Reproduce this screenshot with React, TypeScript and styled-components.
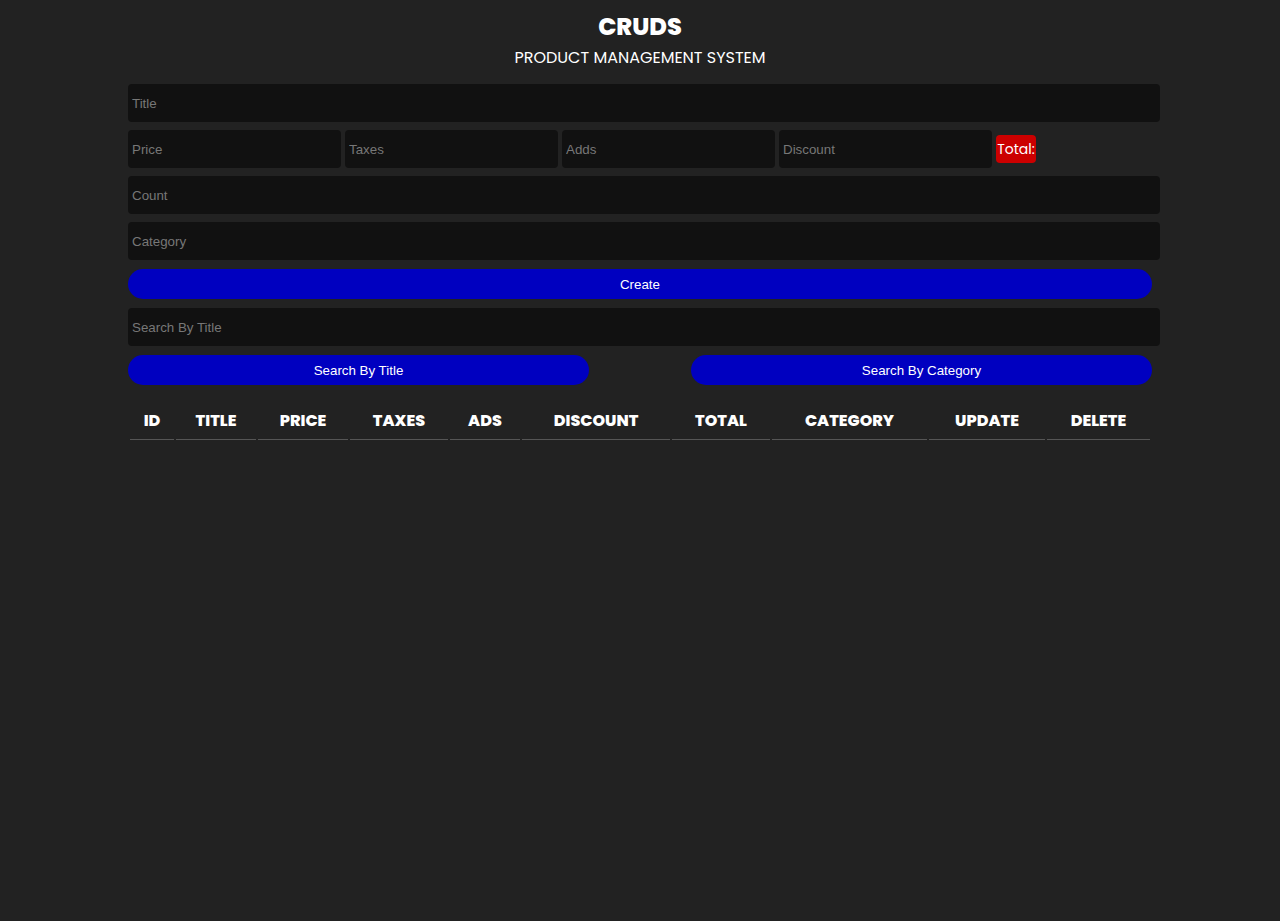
import React from "react";
import styled, { createGlobalStyle } from "styled-components";

const Global = createGlobalStyle`
  html, body { margin: 0; padding: 0; background: #222222; }
  body { font-family: "Liberation Sans", Arial, sans-serif; color: #fff; }
`;

const Page = styled.div`
  min-height: 921px;
  background: #222222;
  display: flex;
  justify-content: center;
`;

const Crud = styled.div`
  width: 1024px;
  display: flex;
  flex-direction: column;
`;

const Head = styled.header`
  display: flex;
  flex-direction: column;
  align-items: center;
  padding-top: 12px;
  font-family: "Poppins", "Lato", "Noto Sans", sans-serif;
`;

const Title = styled.h2`
  margin: 0;
  font-size: 24px;
  font-weight: 800;
  line-height: 30px;
`;

const Sub = styled.p`
  margin: 4px 0 0;
  font-size: 16px;
  font-weight: 400;
  line-height: 24px;
`;

const Inputs = styled.div`
  display: flex;
  flex-direction: column;
  margin-top: 10px;
`;

const Field = styled.input<{ $w?: string }>`
  box-sizing: content-box;
  height: 38px;
  width: ${(p) => p.$w ?? "100%"};
  background: #111111;
  border: none;
  outline: none;
  border-radius: 4px;
  padding: 0 4px;
  margin: 4px 0;
  color: #fff;
  font-family: "Liberation Sans", Arial, sans-serif;
  font-size: 13.333px;
  &::placeholder { color: #777777; }
`;

const PriceRow = styled.div`
  display: flex;
  align-items: center;
  gap: 4px;
`;

const TotalBadge = styled.span`
  height: 28px;
  width: 40px;
  background: #cc0000;
  border-radius: 4px;
  display: flex;
  align-items: center;
  justify-content: center;
  font-family: "Poppins", "Lato", "Noto Sans", sans-serif;
  font-size: 14px;
  color: #fff;
`;

const Button = styled.button<{ $w?: string }>`
  box-sizing: border-box;
  height: 30px;
  width: ${(p) => p.$w ?? "100%"};
  background: #0000c0;
  border: none;
  border-radius: 15px;
  color: #fff;
  font-family: "Liberation Sans", Arial, sans-serif;
  font-size: 13.333px;
  cursor: pointer;
`;

const CreateWrap = styled.div`
  margin: 5px 0 5px;
`;

const SearchRow = styled.div`
  display: flex;
  justify-content: space-between;
  margin-top: 5px;
`;

const Table = styled.table`
  margin-top: 12px;
  width: 1024px;
  border-spacing: 2px;
  font-family: "Poppins", "Lato", "Noto Sans", sans-serif;
`;

const Th = styled.th<{ $w: number }>`
  width: ${(p) => p.$w}px;
  height: 38px;
  font-size: 16px;
  font-weight: 800;
  text-transform: uppercase;
  text-align: center;
  border-bottom: 1px solid #555;
  padding: 0;
  padding-top: 2px;
`;

const cols: [string, number][] = [
  ["id", 44],
  ["title", 80],
  ["price", 90],
  ["taxes", 98],
  ["ads", 70],
  ["discount", 148],
  ["total", 98],
  ["category", 155],
  ["update", 116],
  ["delete", 103],
];

export default function App() {
  return (
    <Page>
      <Global />
      <Crud>
        <Head>
          <Title>CRUDS</Title>
          <Sub>PRODUCT MANAGEMENT SYSTEM</Sub>
        </Head>
        <Inputs>
          <Field placeholder="Title" />
          <PriceRow>
            <Field $w="205px" placeholder="Price" />
            <Field $w="205px" placeholder="Taxes" />
            <Field $w="205px" placeholder="Adds" />
            <Field $w="205px" placeholder="Discount" />
            <TotalBadge>Total:</TotalBadge>
          </PriceRow>
          <Field placeholder="Count" />
          <Field placeholder="Category" />
          <CreateWrap>
            <Button>Create</Button>
          </CreateWrap>
          <Field placeholder="Search By Title" />
          <SearchRow>
            <Button $w="461px">Search By Title</Button>
            <Button $w="461px">Search By Category</Button>
          </SearchRow>
        </Inputs>
        <Table>
          <thead>
            <tr>
              {cols.map(([c, w]) => (
                <Th key={c} $w={w}>{c}</Th>
              ))}
            </tr>
          </thead>
        </Table>
      </Crud>
    </Page>
  );
}
